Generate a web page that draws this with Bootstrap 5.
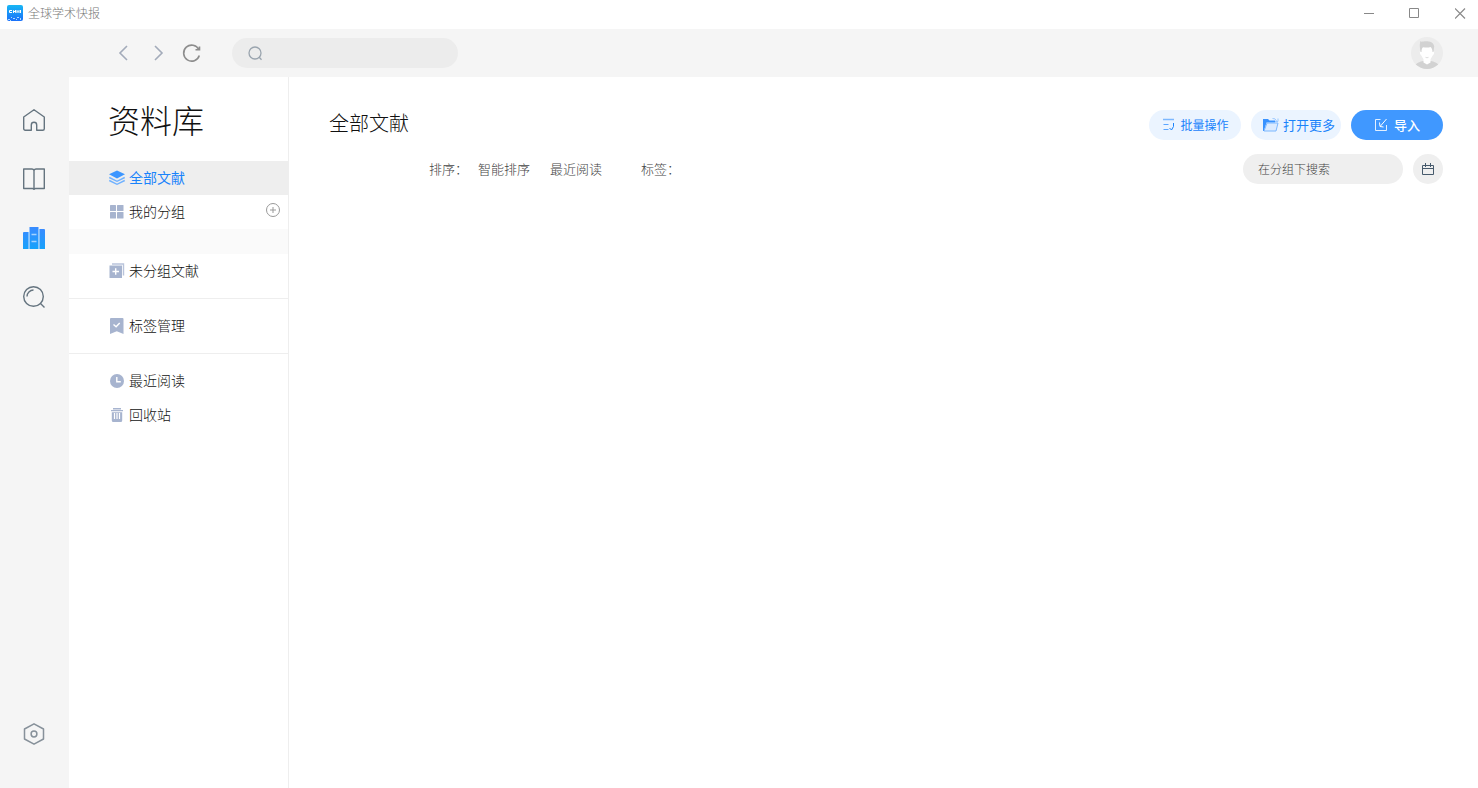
<!DOCTYPE html>
<html lang="zh-CN">
<head>
<meta charset="utf-8">
<meta name="viewport" content="width=device-width, initial-scale=1">
<title>全球学术快报</title>
<link href="https://cdn.jsdelivr.net/npm/bootstrap@5.3.0/dist/css/bootstrap.min.css" rel="stylesheet">
<style>
  body { font-family: "Noto Sans CJK SC", sans-serif; font-weight: 300; font-size: 14px; line-height: 20px; color: #222; background: #fff; }
  svg { display: block; flex: none; }
  button { font-weight: inherit; }
  .plain { border: 0; padding: 0; background: none; color: inherit; }
  .titlebar { height: 29px; padding: 0 12px 3px 7px; font-size: 12px; color: #777; }
  .titlebar .win { gap: 35px; color: #888; }
  .toolbar { height: 48px; background: #f5f5f5; padding: 0 35px 0 118px; }
  .global-search { width: 226px; height: 30px; background: #ececec; margin-left: 30px; padding: 0 16px; }
  .global-search input { outline: 0; min-width: 0; }
  .rail { width: 69px; background: #f5f5f5; padding: 32px 1px 43px 0; gap: 37px; }
  .side { width: 220px; border-right: 1px solid #eee; }
  .side h1 { font-size: 32px; line-height: 48px; font-weight: 300; margin: 0; padding: 18px 0 18px 39px; color: #111; }
  .entry { height: 34px; padding: 0 8px 0 40px; }
  .entry a { color: #111; gap: 4px; text-decoration: none; line-height: 18px; }
  .entry a svg { margin-top: 2px; }
  .entry a { padding-bottom: 2px; }
  .entry.current { background: #eee; }
  .entry.current a { color: #1a83fb; font-weight: 400; }
  .blank-group { height: 25px; background: #fafafa; }
  .rule { border-top: 1px solid #eee; margin: 10px 0; }
  .main { padding: 33px 35px 0 40px; }
  .main h2 { font-size: 20px; line-height: 26px; font-weight: 300; color: #111; }
  .pill { height: 30px; border: 0; display: flex; align-items: center; justify-content: center; padding: 0; color: #1a83fb; background: #ebf4ff; font-size: 13px; font-weight: 400; gap: 4px; width: 92px; }
  .pill.batch { font-size: 12px; gap: 5px; }
  .pill.more { width: 90px; padding-left: 5px; }
  .pill.import { background: #4098ff; color: #fff; gap: 6px; font-weight: 500; }
  .filters { margin-top: 14px; padding-left: 100px; font-size: 13px; color: #444; }
  .filters .sorts { gap: 20px; margin: 0 39px 0 10px; }
  .group-search { width: 160px; height: 30px; border: 0; outline: 0; background: #efefef; padding: 0 15px 2px; font-size: 12px; font-weight: 300; }
  .group-search::placeholder { color: #444; opacity: 1; }
  .cal { width: 30px; height: 30px; background: #efefef; }
</style>
</head>
<body class="vh-100 d-flex flex-column overflow-hidden">

<header class="titlebar d-flex align-items-center justify-content-between">
  <div class="d-flex align-items-center gap-1">
    <svg width="17" height="16" viewBox="0 0 17 16"><defs><linearGradient id="lg" x2="0" y2="1"><stop stop-color="#18b7f4"/><stop offset="1" stop-color="#1a70fa"/></linearGradient></defs><rect width="16" height="16" rx="2" fill="url(#lg)"/><path d="M5 5.500H2.500v2H5M6.500 8V5.500l2 2V5M10 8V5.500l1 1 1-1V8M13.500 5v3" fill="none" stroke="#fff"/><path d="M1 14h2v1H1zM4 12h1v1H4zM6 13h2v1H6zM9 14h1v1H9zM10 12h2v1h-2zM13 13h1v2h-1zM3 15h1v1H3z" fill="#a9dbff"/></svg>
    <span>全球学术快报</span>
  </div>
  <div class="win d-flex align-items-center">
    <button class="plain" aria-label="最小化"><svg width="11" height="11" fill="none" stroke="currentColor"><path d="M1 5.500h10"/></svg></button>
    <button class="plain" aria-label="最大化"><svg width="11" height="11" fill="none" stroke="currentColor"><path d="M.5.5h9v9h-9z"/></svg></button>
    <button class="plain" aria-label="关闭"><svg width="11" height="11" fill="none" stroke="currentColor" stroke-width="1.200"><path d="M0 .5l10 10M10 .5l-10 10"/></svg></button>
  </div>
</header>

<nav class="toolbar d-flex align-items-center">
  <button class="plain" aria-label="后退"><svg width="10" height="16" fill="none" stroke="#a3abba" stroke-width="1.600"><path d="M9 1L2 8l7 7"/></svg></button>
  <button class="plain ms-4 me-3" aria-label="前进"><svg width="14" height="16" fill="none" stroke="#a3abba" stroke-width="1.600"><path d="M3 1l7 7-7 7"/></svg></button>
  <button class="plain" aria-label="刷新"><svg width="20" height="20" fill="none" stroke="#8d8d8d" stroke-width="1.600"><path d="M17.300 12.500A8 8 0 1 1 16.800 6.500M17.500 3.500v3.300h-4"/></svg></button>
  <label class="global-search rounded-pill d-flex align-items-center">
    <svg width="15" height="15" fill="none" stroke="#9aa4ae" stroke-width="1.300"><circle cx="7" cy="7" r="6"/><path d="M11 11l2.500 2.800"/></svg>
    <input class="plain w-100 ms-2" type="text" aria-label="搜索">
  </label>
  <button class="plain ms-auto" aria-label="用户">
    <svg width="32" height="32" viewBox="0 0 32 32"><defs><clipPath id="av"><circle cx="16" cy="16" r="16"/></clipPath></defs><g clip-path="url(#av)"><path fill="#ececec" d="M0 0h32v32H0z"/><path fill="#d2d2d2" d="M3 32c0-4.500 3-6.500 9-8h8c6 1.500 9 3.500 9 8z"/><path fill="#fff" d="M12.500 20h7v5.500L16 27.500l-3.500-2z"/><path fill="#fff" d="M10 10h12v4h1.200q.3 3-1.500 4.500C20.500 21.500 18 23.500 16 23.500s-4.500-2-5.700-5Q8.500 17 8.800 14H10z"/><path fill="#d2d2d2" d="M9.500 15L8.800 10C8.500 7 9.500 5.500 9 4.300c2 .9 3 0 6 0 4 0 7.500 1.200 8.200 5L22.500 15h-1c0-2.500-.8-4-2-5-2 .8-5 .5-7.500.3-1 1-1.500 2.200-1.500 4.700z"/><path d="M14.500 20.300q1.500 1 3 0" fill="none" stroke="#ddd"/></g></svg>
  </button>
</nav>

<div class="d-flex flex-grow-1">
  <nav class="rail d-flex flex-column align-items-center flex-shrink-0">
    <a href="#" aria-label="首页"><svg width="22" height="22" fill="none" stroke="#65747f" stroke-width="1.400" stroke-linejoin="round"><path d="M8.300 21.300H2.200a1.500 1.500 0 0 1-1.500-1.500V8L11 .7 21.300 8v11.800a1.500 1.500 0 0 1-1.500 1.500h-6.100V16a2.700 2.700 0 0 0-5.400 0z"/></svg></a>
    <a href="#" aria-label="阅读"><svg width="22" height="22" fill="none" stroke="#65747f" stroke-width="1.400" stroke-linejoin="round"><path d="M11 2.500Q10.500 1 9 1H.7v19.500H9.500q1 0 1.500 1 .5-1 1.500-1h8.800V1H13q-1.500 0-2 1.500zv19"/></svg></a>
    <a href="#" aria-label="资料库"><svg width="22" height="22"><defs><linearGradient id="bk" x2="0" y2="1"><stop stop-color="#398bff"/><stop offset="1" stop-color="#16a2fb"/></linearGradient></defs><path fill="url(#bk)" d="M0 6q0-1 1-1h5v17H0zM16 2h5q1 0 1 1v19h-6z"/><path fill="#7cc0ff" d="M5 5h1v17H5zM16 2h1v20h-1z"/><path fill="url(#bk)" d="M6.500 0h9v22h-9z"/><path stroke="#a3d3ff" stroke-width="1.500" d="M8.500 7.500h5M8.500 14.500h5"/></svg></a>
    <a href="#" aria-label="搜索"><svg width="22" height="22" fill="none" stroke="#65747f" stroke-width="1.400"><circle cx="10.500" cy="10.500" r="9.800"/><path d="M17.500 17.500l4 4M4 10.500A6.500 6.500 0 0 1 10.500 4"/></svg></a>
    <a href="#" class="mt-auto" aria-label="设置"><svg width="22" height="22" fill="none" stroke="#87919a" stroke-width="1.500" stroke-linejoin="round"><path d="M11 .8l9.500 5.200v10L11 21.200 1.500 16V6z"/><circle cx="11" cy="11" r="2.900"/></svg></a>
  </nav>

  <aside class="side flex-shrink-0">
    <h1>资料库</h1>
    <div class="entry current d-flex align-items-center"><a href="#" class="d-flex align-items-center"><svg width="16" height="16"><path fill="#3c96ff" d="M8 .5l8 3.800-8 4.200-8-4.200z"/><path fill="none" stroke="#6fb1ff" stroke-width="1.400" d="M.3 7.500L8 11.300l7.700-3.800M.3 10.500L8 14.300l7.700-3.800"/></svg>全部文献</a></div>
    <div class="entry d-flex align-items-center justify-content-between"><a href="#" class="d-flex align-items-center"><svg width="16" height="16" fill="#a7b4cf"><rect x="1" y="1" width="6" height="6" rx=".5"/><rect x="8" y="1" width="6.500" height="6" rx=".5"/><rect x="1" y="8" width="6" height="6.500" rx=".5"/><rect x="8" y="8" width="6.500" height="6.500" rx=".5"/></svg>我的分组</a>
      <button class="plain pb-1" aria-label="新建分组"><svg width="14" height="14" fill="none" stroke="#999"><circle cx="7" cy="7" r="6.500"/><path d="M4 7h6M7 4v6"/></svg></button></div>
    <div class="blank-group"></div>
    <div class="entry d-flex align-items-center"><a href="#" class="d-flex align-items-center"><svg width="16" height="16"><path fill="none" stroke="#b9c4db" stroke-width="1.400" d="M3 1h11.500v11.500"/><path fill="#a7b4cf" d="M.5 2.500H13V15H.5z"/><path stroke="#fff" stroke-width="1.400" d="M3.500 8.500h6.500M6.700 5.300v6.400"/></svg>未分组文献</a></div>
    <div class="rule"></div>
    <div class="entry d-flex align-items-center"><a href="#" class="d-flex align-items-center"><svg width="16" height="16"><path fill="#a7b4cf" d="M2 0h11.500q1 0 1 1v15l-6.700-2.700L1 16V1q0-1 1-1z"/><path fill="none" stroke="#fff" stroke-width="1.400" d="M4.500 6.500l2.600 2.300L10.700 5"/></svg>标签管理</a></div>
    <div class="rule"></div>
    <div class="entry d-flex align-items-center"><a href="#" class="d-flex align-items-center"><svg width="16" height="16"><circle cx="8" cy="8" r="7" fill="#a7b4cf"/><path fill="none" stroke="#fff" stroke-width="1.400" d="M7.800 4v4.700h4"/></svg>最近阅读</a></div>
    <div class="entry d-flex align-items-center"><a href="#" class="d-flex align-items-center"><svg width="16" height="16"><path fill="#a7b4cf" d="M4 1h8v1.500H4zM2 3h12v1.300H2zM2.800 5.300h10.400v8.200q0 1.500-1.500 1.500H4.300q-1.500 0-1.500-1.500z"/><path stroke="#fff" stroke-width="1.200" d="M5.500 6v6M8 6v6M10.500 6v6"/></svg>回收站</a></div>
  </aside>

  <main class="main flex-grow-1">
    <div class="d-flex justify-content-between">
      <h2 class="mb-0">全部文献</h2>
      <div class="d-flex" style="gap:10px">
        <button class="pill batch rounded-pill"><svg width="14" height="14" fill="none" stroke="#1a83fb"><path d="M2 1.500h11" stroke="#7db8ff" stroke-width="1.500"/><path d="M2.500 6.500h5M2.500 11.500h5" stroke="#5aa5ff"/><path d="M12.500 5v3.500l-2 3.500-2-2"/></svg>批量操作</button>
        <button class="pill more rounded-pill"><svg width="17" height="16"><path fill="#3892ff" d="M1 2h5l1.500 1.500H13v2H4.500L2 14H1z"/><path fill="#dcebff" stroke="#7db8ff" d="M5 6h11l-2 8H2z"/><path fill="none" stroke="#9cc9ff" d="M10.500 1.500q3-.5 4 2.500M16 1.500v3h-3"/></svg>打开更多</button>
        <button class="pill import rounded-pill"><svg width="14" height="14" fill="none" stroke="#fff"><path d="M6.500 1.500H1.500v11h11V7" stroke="#e3f0ff"/><path d="M12.500 1L6.500 8M5.500 4.500l.5 4 3.500.5"/></svg>导入</button>
      </div>
    </div>
    <div class="filters d-flex align-items-center">
      <span>排序：</span>
      <div class="sorts d-flex">
        <button class="plain">智能排序</button>
        <button class="plain">最近阅读</button>
      </div>
      <span>标签：</span>
      <div class="ms-auto d-flex" style="gap:10px">
        <input class="group-search rounded-pill" type="text" placeholder="在分组下搜索" aria-label="在分组下搜索">
        <button class="plain cal rounded-circle d-flex align-items-center justify-content-center" aria-label="选择日期"><svg width="12" height="12" fill="none" stroke="#465a6c"><path d="M.5 2.500h11v9H.5zM.5 5.500h11M3.500 0v4M8.500 0v4"/></svg></button>
      </div>
    </div>
  </main>
</div>

<script src="https://cdn.jsdelivr.net/npm/bootstrap@5.3.0/dist/js/bootstrap.bundle.min.js"></script>
</body>
</html>
